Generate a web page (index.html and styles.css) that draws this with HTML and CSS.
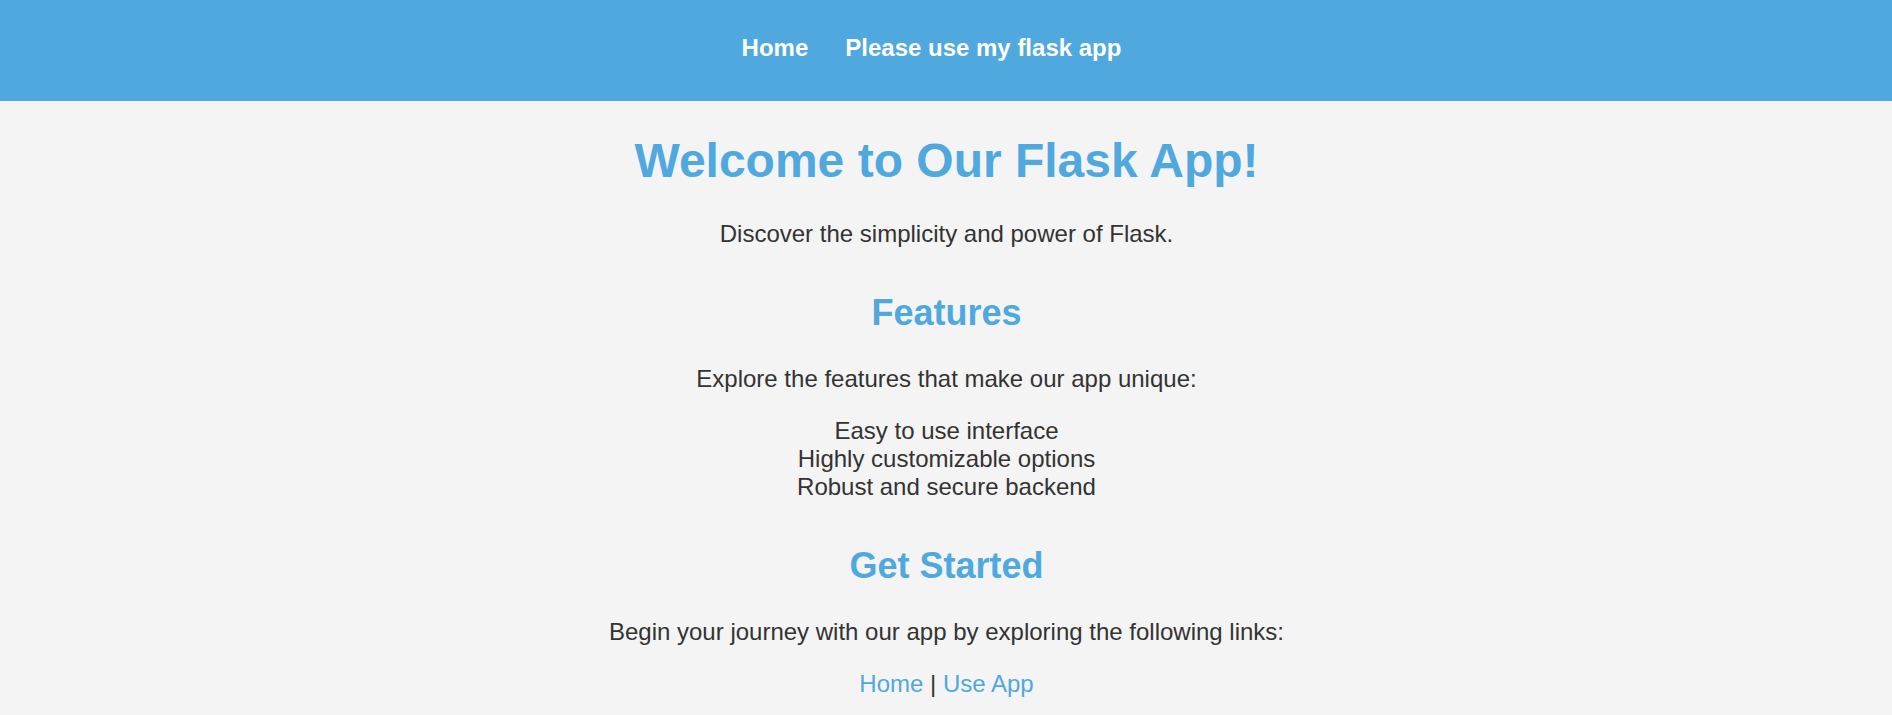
FILE: index.html
```html
<!DOCTYPE html>
<html lang="en">
<head>
<meta charset="utf-8">
<title>Flask App</title>
<link rel="stylesheet" href="styles.css">
</head>
<body>
<header class="site-header">
  <nav>
    <ul class="nav-list">
      <li class="nav-item"><a class="nav-link" href="#">Home</a></li>
      <li class="nav-item"><a class="nav-link" href="#">Please use my flask app</a></li>
    </ul>
  </nav>
</header>
<main class="content">
  <section class="hero">
    <h1 class="title">Welcome to Our Flask App!</h1>
    <p class="text">Discover the simplicity and power of Flask.</p>
  </section>
  <section class="block">
    <h2 class="subtitle">Features</h2>
    <p class="text">Explore the features that make our app unique:</p>
    <ul class="features">
      <li>Easy to use interface</li>
      <li>Highly customizable options</li>
      <li>Robust and secure backend</li>
    </ul>
  </section>
  <section class="block">
    <h2 class="subtitle">Get Started</h2>
    <p class="text">Begin your journey with our app by exploring the following links:</p>
    <p class="text links"><a class="link" href="#">Home</a> | <a class="link" href="#">Use App</a></p>
  </section>
</main>
</body>
</html>
```
FILE: styles.css
```css
html, body {
  margin: 0;
  padding: 0;
}
body {
  font-family: "Liberation Sans", Arial, sans-serif;
  font-size: 24px;
  background: #f4f4f4;
  color: #333333;
}
.site-header {
  background: #4fa8de;
  padding: 34px 0 39px;
}
.nav-list {
  list-style: none;
  margin: 0;
  padding: 0 0 0 1px;
  display: flex;
  justify-content: center;
  gap: 7px;
  line-height: 28px;
}
.nav-item {
  margin-right: 30px;
}
.nav-link {
  color: #ffffff;
  font-weight: bold;
  text-decoration: none;
}
.content {
  text-align: center;
  padding-left: 1px;
}
.title {
  font-size: 48px;
  margin: 32px 0;
  color: #4fa8de;
}
.text {
  margin: 24px 0;
}
.subtitle {
  font-size: 36px;
  margin: 44px 0 31px;
  color: #4fa8de;
}
.features {
  list-style: none;
  margin: 24px 0;
  padding: 0;
}
.link {
  color: #4fa8de;
  text-decoration: none;
}
```
